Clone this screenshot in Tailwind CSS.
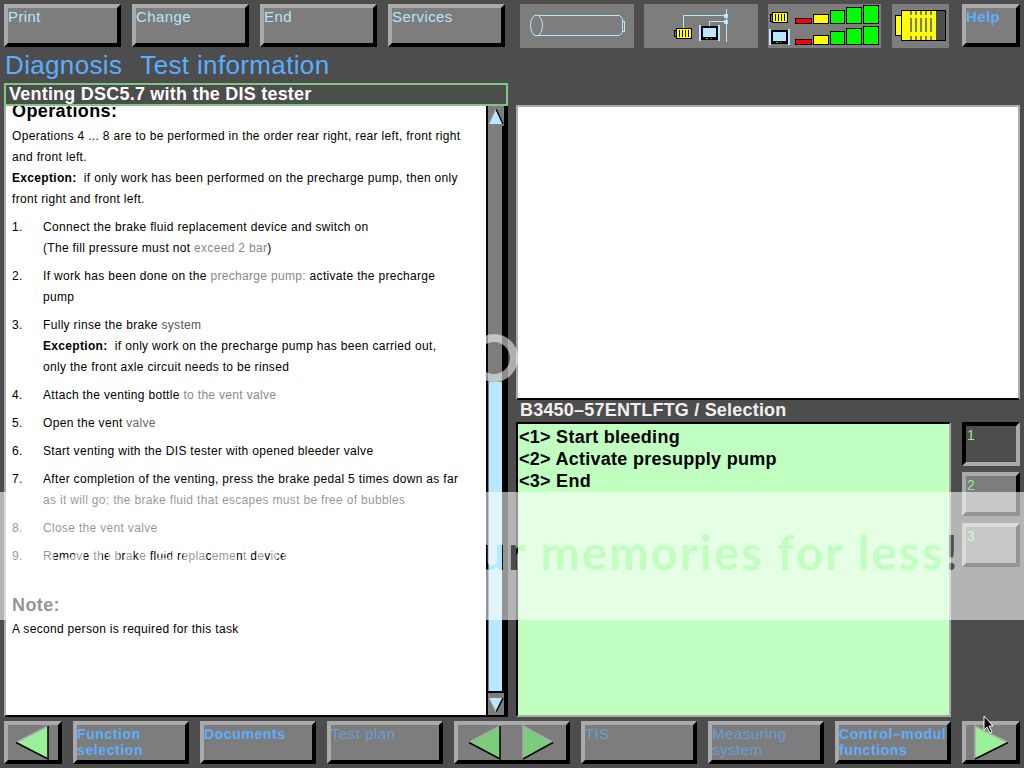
<!DOCTYPE html>
<html lang="en">
<head>
  <meta charset="UTF-8" />
  <title>Diagnosis - Test information</title>
  <script src="https://cdn.jsdelivr.net/npm/@tailwindcss/browser@4"></script>
</head>
<body class="m-0 bg-[#4d4d4d]">
<div class="relative w-[1024px] h-[768px] overflow-hidden bg-[#4d4d4d] font-['Liberation_Sans',sans-serif]">

  <!-- Top bar -->
  <div class="flex items-start pt-[4px] pl-[4px] h-[48px]">
    <div class="flex gap-[11px]">
      <button class="w-[117px] h-[43px] border-4 border-t-[#aaaaaa] border-l-[#aaaaaa] border-r-black border-b-black bg-[#7d7d7d] text-left flex items-start text-[15px] leading-[17px] text-[#b4e6ff] tracking-[0.4px]">Print</button>
      <button class="w-[117px] h-[43px] border-4 border-t-[#aaaaaa] border-l-[#aaaaaa] border-r-black border-b-black bg-[#7d7d7d] text-left flex items-start text-[15px] leading-[17px] text-[#b4e6ff] tracking-[0.4px]">Change</button>
      <button class="w-[117px] h-[43px] border-4 border-t-[#aaaaaa] border-l-[#aaaaaa] border-r-black border-b-black bg-[#7d7d7d] text-left flex items-start text-[15px] leading-[17px] text-[#b4e6ff] tracking-[0.4px]">End</button>
      <button class="w-[117px] h-[43px] border-4 border-t-[#aaaaaa] border-l-[#aaaaaa] border-r-black border-b-black bg-[#7d7d7d] text-left flex items-start text-[15px] leading-[17px] text-[#b4e6ff] tracking-[0.4px]">Services</button>
    </div>

    <!-- Status panels -->
    <div class="ml-[15px] flex gap-[10px]">
      <div class="w-[114px] h-[44px] bg-[#7d7d7d]">
        <svg width="114" height="44" fill="none" stroke="#b8e8ff" stroke-width="1">
          <ellipse cx="16.5" cy="21.5" rx="6" ry="10.5" />
          <path d="M16.5 11.5H99.5L102.5 14.5V28.5L99.5 31.5H16.5" />
          <rect x="102.5" y="17.5" width="2" height="10" />
        </svg>
      </div>
      <div class="w-[114px] h-[44px] bg-[#7d7d7d]">
        <svg width="114" height="44">
          <g fill="none" stroke="#b8e8ff" stroke-width="1">
            <path d="M82.5 5V38" />
            <path d="M39.5 25V11.5H82" />
            <path d="M65.5 22V17.5H82" />
          </g>
          <rect x="80" y="10" width="4" height="4" fill="#b8e8ff" />
          <rect x="80" y="16" width="4" height="4" fill="#b8e8ff" />
          <rect x="30.5" y="26.5" width="2" height="6" fill="#7d7d7d" stroke="#000" />
          <rect x="32.5" y="24.5" width="15" height="10" fill="#ffff00" stroke="#000" />
          <path d="M35.5 26V33M38.5 26V33M41.5 26V33M44.5 26V33" stroke="#000" />
          <rect x="55" y="21" width="2" height="16" fill="#b8e8ff" />
          <rect x="74" y="21" width="2" height="16" fill="#b8e8ff" />
          <rect x="57" y="22" width="17" height="14" fill="#000" />
          <rect x="59" y="24" width="13" height="9" fill="#b8e8ff" />
          <rect x="62" y="34" width="2" height="1" fill="#00ff00" />
          <rect x="66" y="34" width="2" height="1" fill="#ff0000" />
        </svg>
      </div>
      <div class="w-[113px] h-[44px] bg-[#7d7d7d]">
        <svg width="113" height="44" stroke="#000">
          <rect x="2.5" y="10.5" width="2" height="7" fill="#7d7d7d" />
          <rect x="4.5" y="8.5" width="15" height="10" fill="#ffff00" />
          <path d="M7.5 10V17M10.5 10V17M13.5 10V17M16.5 10V17" />
          <rect x="1" y="25" width="2" height="16" fill="#b8e8ff" stroke="none" />
          <rect x="20" y="25" width="2" height="16" fill="#b8e8ff" stroke="none" />
          <rect x="3" y="26" width="17" height="14" fill="#000" stroke="none" />
          <rect x="5" y="28" width="13" height="9" fill="#b8e8ff" stroke="none" />
          <rect x="8" y="38" width="2" height="1" fill="#00ff00" stroke="none" />
          <rect x="12" y="38" width="2" height="1" fill="#ff0000" stroke="none" />
          <rect x="27.5" y="14.5" width="16" height="5" fill="#ff0000" />
          <rect x="45.5" y="10.5" width="15" height="9" fill="#ffff00" />
          <rect x="62.5" y="6.5" width="14" height="13" fill="#00ff00" />
          <rect x="78.5" y="3.5" width="15" height="16" fill="#00ff00" />
          <rect x="95.5" y="1.5" width="15" height="18" fill="#00ff00" />
          <rect x="27.5" y="35.5" width="16" height="5" fill="#ff0000" />
          <rect x="45.5" y="31.5" width="15" height="9" fill="#ffff00" />
          <rect x="62.5" y="27.5" width="14" height="13" fill="#00ff00" />
          <rect x="78.5" y="24.5" width="15" height="16" fill="#00ff00" />
          <rect x="95.5" y="22.5" width="15" height="18" fill="#00ff00" />
        </svg>
      </div>
      <div class="ml-[1px] w-[57px] h-[44px] bg-[#7d7d7d]">
        <svg width="57" height="44">
          <rect x="3.5" y="11.5" width="6" height="20" fill="#ffff00" stroke="#000" />
          <rect x="9.5" y="6.5" width="44" height="30" fill="#4d4d4d" stroke="#000" />
          <rect x="10" y="7" width="34" height="29" fill="#ffff00" />
          <path d="M18 7h2v4h-2zM23 7h2v4h-2zM28 7h2v4h-2zM33 7h2v4h-2zM38 7h2v4h-2zM18 14h2v14h-2zM23 14h2v14h-2zM28 14h2v14h-2zM33 14h2v14h-2zM38 14h2v14h-2zM18 32h2v4h-2zM23 32h2v4h-2zM28 32h2v4h-2zM33 32h2v4h-2zM38 32h2v4h-2z" fill="#7d7d7d" />
        </svg>
      </div>
    </div>

    <button class="ml-[13px] w-[58px] h-[43px] border-4 border-t-[#aaaaaa] border-l-[#aaaaaa] border-r-black border-b-black bg-[#7d7d7d] text-left flex items-start text-[15px] leading-[17px] text-[#5aaeff] font-bold tracking-[0.4px]">Help</button>
  </div>

  <!-- Heading -->
  <div class="h-[35px] pb-[2px] pl-[5px] flex gap-[18px] items-center text-[26px] leading-[30px] text-[#5aaeff] tracking-[0.35px]">
    <span>Diagnosis</span>
    <span>Test information</span>
  </div>

  <!-- Main area -->
  <div class="h-[634px] pl-[4px] flex gap-[8px]">

    <!-- Left column: title and instructions -->
    <div class="w-[504px] flex flex-col">
      <div class="h-[23px] border-2 border-[#7cc87c] pl-[3px] flex items-center text-[18px] font-bold text-white tracking-[0.22px]">Venting DSC5.7 with the DIS tester</div>
      <div class="flex-1 min-h-0 flex border-2 border-t-0 border-l-[#aaaaaa] border-r-black border-b-black bg-white">
        <div class="w-[480px] overflow-hidden pl-[6px] pr-[12px] text-[12px] leading-[21px] tracking-[0.32px] text-black">
          <p class="-mt-[5px] h-[25px] text-[18px] font-bold leading-[21px] tracking-[0.4px]">Operations:</p>
          <p>Operations 4 ... 8 are to be performed in the order rear right, rear left, front right and front left.</p>
          <p><b>Exception:</b>&nbsp; if only work has been performed on the precharge pump, then only front right and front left.</p>
          <div class="mt-[7px] flex"><span class="w-[31px] shrink-0">1.</span><p>Connect the brake fluid replacement device and switch on<br />(The fill pressure must not <span class="text-[#888888]">exceed 2 bar</span>)</p></div>
          <div class="mt-[7px] flex"><span class="w-[31px] shrink-0">2.</span><p>If work has been done on the <span class="text-[#888888]">precharge pump:</span> activate the precharge<br />pump</p></div>
          <div class="mt-[7px] flex"><span class="w-[31px] shrink-0">3.</span><p>Fully rinse the brake <span class="text-[#555555]">system</span><br /><b>Exception:</b>&nbsp; if only work on the precharge pump has been carried out,<br />only the front axle circuit needs to be rinsed</p></div>
          <div class="mt-[7px] flex"><span class="w-[31px] shrink-0">4.</span><p>Attach the venting bottle <span class="text-[#888888]">to the vent valve</span></p></div>
          <div class="mt-[7px] flex"><span class="w-[31px] shrink-0">5.</span><p>Open the vent <span class="text-[#666666]">valve</span></p></div>
          <div class="mt-[7px] flex"><span class="w-[31px] shrink-0">6.</span><p>Start venting with the DIS tester with opened bleeder valve</p></div>
          <div class="mt-[7px] flex"><span class="w-[31px] shrink-0">7.</span><p>After completion of the venting, press the brake pedal 5 times down as far<br />as it will go; the brake fluid that escapes must be free of bubbles</p></div>
          <div class="mt-[7px] flex"><span class="w-[31px] shrink-0">8.</span><p>Close the vent valve</p></div>
          <div class="mt-[7px] flex"><span class="w-[31px] shrink-0">9.</span><p>Remove the brake fluid replacement device</p></div>
          <p class="mt-[28px] h-[24px] text-[18px] font-bold tracking-[0.4px]">Note:</p>
          <p>A second person is required for this task</p>
        </div>
        <!-- Scrollbar -->
        <div class="w-[20px] flex flex-col border-x-2 border-l-black border-r-black bg-[#7d7d7d]">
          <div class="h-[20px] shrink-0">
            <svg width="16" height="20" class="block">
              <path d="M1 18 L8 3 L15 18Z" fill="#b8e8ff" />
              <path d="M8 3 L15 18" stroke="#000" stroke-width="1.5" />
              <path d="M1 18 L8 3" stroke="#aaaaaa" stroke-width="1" />
            </svg>
          </div>
          <div class="flex-1 min-h-0 flex flex-col border-r-2 border-r-black">
            <div class="h-[256px]"></div>
            <div class="flex-1 min-h-0 ml-[1px] bg-[#b8e8ff]"></div>
            <div class="h-[2px] bg-black"></div>
          </div>
          <div class="h-[22px] shrink-0">
            <svg width="16" height="22" class="block">
              <path d="M1 5 L8 19 L15 5Z" fill="#b8e8ff" />
              <path d="M8 19 L15 5" stroke="#000" stroke-width="1.5" />
              <path d="M1 5 L8 19" stroke="#aaaaaa" stroke-width="1" />
            </svg>
          </div>
        </div>
      </div>
    </div>

    <!-- Right column -->
    <div class="w-[504px] pt-[22px] flex flex-col">
      <div class="h-[295px] border-2 border-t-[#aaaaaa] border-l-[#aaaaaa] border-r-[#aaaaaa] border-b-black bg-white"></div>
      <div class="h-[22px] pb-[1px] pl-[4px] flex items-center text-[18px] font-bold text-[#f0f0f0] tracking-[0.2px]">B3450–57ENTLFTG / Selection</div>
      <div class="flex-1 min-h-0 flex gap-[11px]">
        <div class="w-[435px] border-2 border-t-black border-l-black border-r-[#aaaaaa] border-b-[#aaaaaa] bg-[#c0ffc0] pl-[1px] pt-[2px] text-[18px] font-bold leading-[22px] text-black tracking-[0.27px]">
          <p>&lt;1&gt; Start bleeding</p>
          <p>&lt;2&gt; Activate presupply pump</p>
          <p>&lt;3&gt; End</p>
        </div>
        <div class="w-[58px] flex flex-col gap-[6px]">
          <button class="h-[44px] border-4 border-t-black border-l-black border-r-[#aaaaaa] border-b-[#aaaaaa] bg-[#4d4d4d] text-left flex items-start text-[14px] leading-[16px] text-[#90ee90] pl-[1px] pt-[1px]">1</button>
          <button class="h-[44px] border-4 border-t-[#aaaaaa] border-l-[#aaaaaa] border-r-black border-b-black bg-[#7d7d7d] text-left flex items-start text-[14px] leading-[16px] text-[#90ee90] pl-[1px] pt-[1px]">2</button>
          <button class="mt-[1px] h-[44px] border-4 border-t-[#aaaaaa] border-l-[#aaaaaa] border-r-black border-b-black bg-[#7d7d7d] text-left flex items-start text-[14px] leading-[16px] text-[#90ee90] pl-[1px] pt-[1px]">3</button>
        </div>
      </div>
    </div>
  </div>

  <!-- Bottom bar -->
  <div class="mt-[4px] pl-[4px] flex gap-[11px]">
    <button class="w-[58px] h-[43px] border-4 border-t-[#aaaaaa] border-l-[#aaaaaa] border-r-black border-b-black bg-[#7d7d7d]">
      <svg width="50" height="35" class="block"><path d="M40 1 L8 17.5 L40 34Z" fill="#98f098" /><path d="M40 1 L8 17.5" stroke="#aaaaaa" stroke-width="1.5" /><path d="M8 17.5 L40 34 V1" stroke="#000" fill="none" stroke-width="1.5" /></svg>
    </button>
    <button class="w-[116px] h-[43px] border-4 border-t-[#aaaaaa] border-l-[#aaaaaa] border-r-black border-b-black bg-[#7d7d7d] text-left flex items-start pt-[1px] text-[14px] leading-[16px] font-bold text-[#5aaeff] tracking-[0.6px]">Function<br />selection</button>
    <button class="w-[116px] h-[43px] border-4 border-t-[#aaaaaa] border-l-[#aaaaaa] border-r-black border-b-black bg-[#7d7d7d] text-left flex items-start pt-[1px] text-[14px] leading-[16px] font-bold text-[#5aaeff] tracking-[0.6px]">Documents</button>
    <button class="w-[116px] h-[43px] border-4 border-t-[#aaaaaa] border-l-[#aaaaaa] border-r-black border-b-black bg-[#7d7d7d] text-left flex items-start pt-[1px] text-[15px] leading-[16px] text-[#5aaeff]/70 tracking-[0.5px]">Test plan</button>
    <button class="w-[116px] h-[43px] border-4 border-t-[#aaaaaa] border-l-[#aaaaaa] border-r-black border-b-black bg-[#7d7d7d]">
      <svg width="108" height="35" class="block">
        <path d="M42 1 L11 17.5 L42 34Z" fill="#7ccc7c" /><path d="M42 1 L11 17.5" stroke="#aaaaaa" stroke-width="1.5" /><path d="M11 17.5 L42 34 V1" stroke="#000" fill="none" stroke-width="1.5" />
        <path d="M65 1 L95 17.5 L65 34Z" fill="#7ccc7c" /><path d="M65 34 V1 L95 17.5" stroke="#aaaaaa" fill="none" stroke-width="1.5" /><path d="M65 34 L95 17.5" stroke="#000" stroke-width="1.5" />
      </svg>
    </button>
    <button class="w-[116px] h-[43px] border-4 border-t-[#aaaaaa] border-l-[#aaaaaa] border-r-black border-b-black bg-[#7d7d7d] text-left flex items-start pt-[1px] text-[15px] leading-[16px] text-[#5aaeff]/70 tracking-[0.5px]">TIS</button>
    <button class="w-[116px] h-[43px] border-4 border-t-[#aaaaaa] border-l-[#aaaaaa] border-r-black border-b-black bg-[#7d7d7d] text-left flex items-start pt-[1px] text-[15px] leading-[16px] text-[#5aaeff]/70 tracking-[0.5px]">Measuring<br />system</button>
    <button class="w-[116px] h-[43px] border-4 border-t-[#aaaaaa] border-l-[#aaaaaa] border-r-black border-b-black bg-[#7d7d7d] overflow-hidden text-left flex items-start pt-[1px] text-[14px] leading-[16px] font-bold text-[#5aaeff] tracking-[0.6px] whitespace-nowrap"><span class="block w-[108px] overflow-hidden">Control–module<br />functions</span></button>
    <button class="w-[58px] h-[43px] border-4 border-t-[#aaaaaa] border-l-[#aaaaaa] border-r-black border-b-black bg-[#7d7d7d]">
      <svg width="50" height="35" class="block"><path d="M9 1 L42 17.5 L9 34Z" fill="#98f098" /><path d="M9 34 V1 L42 17.5" stroke="#aaaaaa" fill="none" stroke-width="1.5" /><path d="M9 34 L42 17.5" stroke="#000" stroke-width="1.5" /></svg>
    </button>
  </div>

  <!-- Watermark lying over the screenshot -->
  <svg class="absolute left-0 top-0 pointer-events-none" width="1024" height="768">
    <mask id="band">
      <rect x="0" y="0" width="1024" height="768" fill="#fff" />
      <text x="960" y="570" text-anchor="end" font-family="Lato, sans-serif" font-size="47" font-weight="700" letter-spacing="2.2" fill="#000">Protect more of your memories for less!</text>
    </mask>
    <rect x="0" y="492" width="1024" height="128" fill="#fff" fill-opacity="0.58" mask="url(#band)" />
    <circle cx="494" cy="358" r="20" fill="none" stroke="#fff" stroke-opacity="0.55" stroke-width="8" />
    <!-- mouse pointer -->
    <path d="M984 716 V730 L987 727 L990 733 L992 732 L989 726 L993 726 Z" fill="#000" stroke="#fff" stroke-width="1" />
  </svg>
</div>
</body>
</html>
